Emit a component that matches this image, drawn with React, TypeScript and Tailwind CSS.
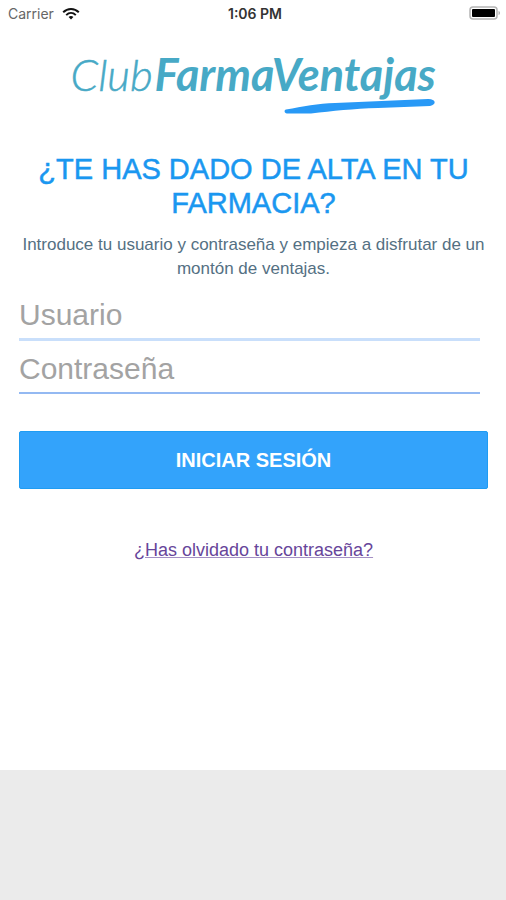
function WifiIcon() {
  return (
    <svg width="18" height="13" viewBox="0 0 18 13" fill="none" stroke="#111" strokeWidth="2" aria-hidden="true">
      <path d="M1.2 5.2C5.6 0.9 12.4 0.9 16.8 5.2" />
      <path d="M4.2 8.1C7 5.4 11 5.4 13.8 8.1" />
      <path d="M9 12.4L6.6 10C8 8.7 10 8.7 11.4 10Z" fill="#111" stroke="none" />
    </svg>
  );
}

function BatteryIcon() {
  return (
    <svg width="33" height="15" viewBox="0 0 33 15" aria-hidden="true">
      <rect x="1" y="1" width="27" height="12" rx="3" fill="#fff" stroke="#b4b4b4" strokeWidth="1.5" />
      <rect x="3" y="3" width="23" height="8" rx="1" fill="#000" />
      <path d="M29.5 5C31.5 5.5 31.5 8.5 29.5 9Z" fill="#b4b4b4" />
    </svg>
  );
}

function StatusBar() {
  return (
    <header className="grid h-[26px] grid-cols-3 items-center pl-2 pr-1 font-['Inter',sans-serif] text-[14px]">
      <div className="flex items-center gap-2 text-[#666]">
        Carrier
        <WifiIcon />
      </div>
      <div className="text-center font-semibold text-[#333]">1:06 PM</div>
      <div className="flex justify-end">
        <BatteryIcon />
      </div>
    </header>
  );
}

function Logo() {
  return (
    <div className="relative mx-auto mt-[18px] flex h-[76px] w-[366px] items-baseline whitespace-nowrap font-['Lato',sans-serif] text-[45px] italic leading-[60px] text-[#47a9c6]">
      <span className="w-[84px] text-[44px] font-light [-webkit-text-stroke:0.5px_#47a9c6]">Club</span>
      <span className="font-bold">FarmaVentajas</span>
      <svg className="absolute right-0 top-[54px]" width="154" height="17" viewBox="0 0 154 17" aria-hidden="true">
        <path
          d="M3 11.5C20 8.5 35 5.5 52 5L145 1C153 0.8 154 6.5 147 8L95 10C70 10.8 50 13 28 15.5L4 15.5C1 15 1 12 3 11.5Z"
          fill="#2899f6"
        />
      </svg>
    </div>
  );
}

const fieldClass =
  "block w-full bg-transparent text-[30px] leading-9 text-[#555] outline-none placeholder:text-[#a3a3a3] placeholder:opacity-100";

export default function App() {
  return (
    <div className="flex min-h-screen flex-col bg-white font-['Liberation_Sans',Arial,sans-serif]">
      <StatusBar />
      <main className="flex flex-1 flex-col pl-[19px] pr-[18px]">
        <Logo />
        <h1 className="mt-8 text-center text-[29px] leading-[34px] text-[#1a97f0] [-webkit-text-stroke:0.5px_#1a97f0]">
          ¿TE HAS DADO DE ALTA EN TU FARMACIA?
        </h1>
        <p className="mt-[13px] text-center text-[17px] leading-6 text-[#547083]">
          Introduce tu usuario y contraseña y empieza a disfrutar de un montón de ventajas.
        </p>
        <form className="mt-4" onSubmit={(e) => e.preventDefault()}>
          <div className="mr-2 flex flex-col gap-[10px]">
            <input
              type="text"
              aria-label="Usuario"
              placeholder="Usuario"
              className={`${fieldClass} border-b-3 border-[#c9dffb] pb-[5px]`}
            />
            <input
              type="password"
              aria-label="Contraseña"
              placeholder="Contraseña"
              className={`${fieldClass} border-b-2 border-[#94b9f2] pb-[5px]`}
            />
          </div>
          <button
            type="submit"
            className="mt-[37px] h-[58px] w-full rounded-xs border border-[#1f9cf2] bg-[#33a3fb] text-[20px] font-bold text-white"
          >
            INICIAR SESIÓN
          </button>
        </form>
        <a href="#recuperar" className="mt-[47px] self-center text-[18px] leading-7 text-[#67459a] underline decoration-[#a48fc4]">
          ¿Has olvidado tu contraseña?
        </a>
      </main>
      <footer className="h-[130px] bg-[#ebebeb]" />
    </div>
  );
}
